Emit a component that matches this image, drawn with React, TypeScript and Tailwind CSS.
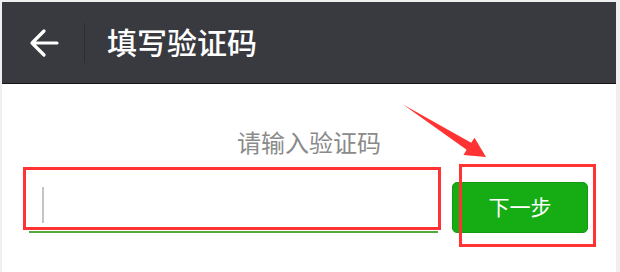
export default function App() {
  return (
    <div
      className="relative w-[620px] h-[272px] overflow-hidden bg-[#efefef] pt-[2px] pl-[2px] pr-[4px]"
      style={{ fontFamily: '"Noto Sans", "Noto Sans CJK SC", sans-serif' }}
    >
      <div className="flex h-full flex-col bg-white">
        {/* Top bar */}
        <div className="flex h-[82px] shrink-0 items-center bg-[#393a3f] border-b border-[#151517]">
          <button className="ml-[27px] flex h-[30px] w-[30px] items-center justify-center">
            <svg width="30" height="30" viewBox="0 0 30 30" fill="none">
              <path
                d="M28 15H3M15 3L3 15l12 12"
                stroke="#ffffff"
                strokeWidth="3.2"
                strokeLinecap="round"
                strokeLinejoin="round"
              />
            </svg>
          </button>
          <div className="ml-[25px] h-[40px] w-px bg-[#2c2d31]" />
          <h1 className="ml-[22px] text-[30px] font-medium leading-none text-white">填写验证码</h1>
        </div>

        {/* Body */}
        <div className="mt-[43px] text-center text-[24px] leading-[32px] text-[#8a8a8a]">
          请输入验证码
        </div>

        <div className="mt-[23px] flex h-[51px] items-stretch gap-[14px] pl-[27px] pr-[28px]">
          <div className="relative flex-1 border-b-2 border-[#55a83f]">
            <div className="absolute left-[13px] top-[5px] h-[36px] w-[2px] bg-[#c4c4c4]" />
          </div>
          <button className="w-[136px] rounded-[5px] border border-[#129a11] bg-[#16ad14] text-[21px] text-white">
            下一步
          </button>
        </div>
      </div>

      {/* Red annotations */}
      <div className="pointer-events-none absolute left-[23px] top-[167px] h-[63px] w-[418px] border-[3px] border-[#ff3333]" />
      <div className="pointer-events-none absolute left-[459px] top-[164px] h-[83px] w-[137px] border-[3px] border-[#ff3333]" />
      <svg className="pointer-events-none absolute left-0 top-0" width="620" height="272">
        <polygon
          points="403,104.5 471.2,142.8 474.5,137.8 486,157 463.5,155 466.6,149.8"
          fill="#ff3333"
        />
      </svg>
    </div>
  );
}
